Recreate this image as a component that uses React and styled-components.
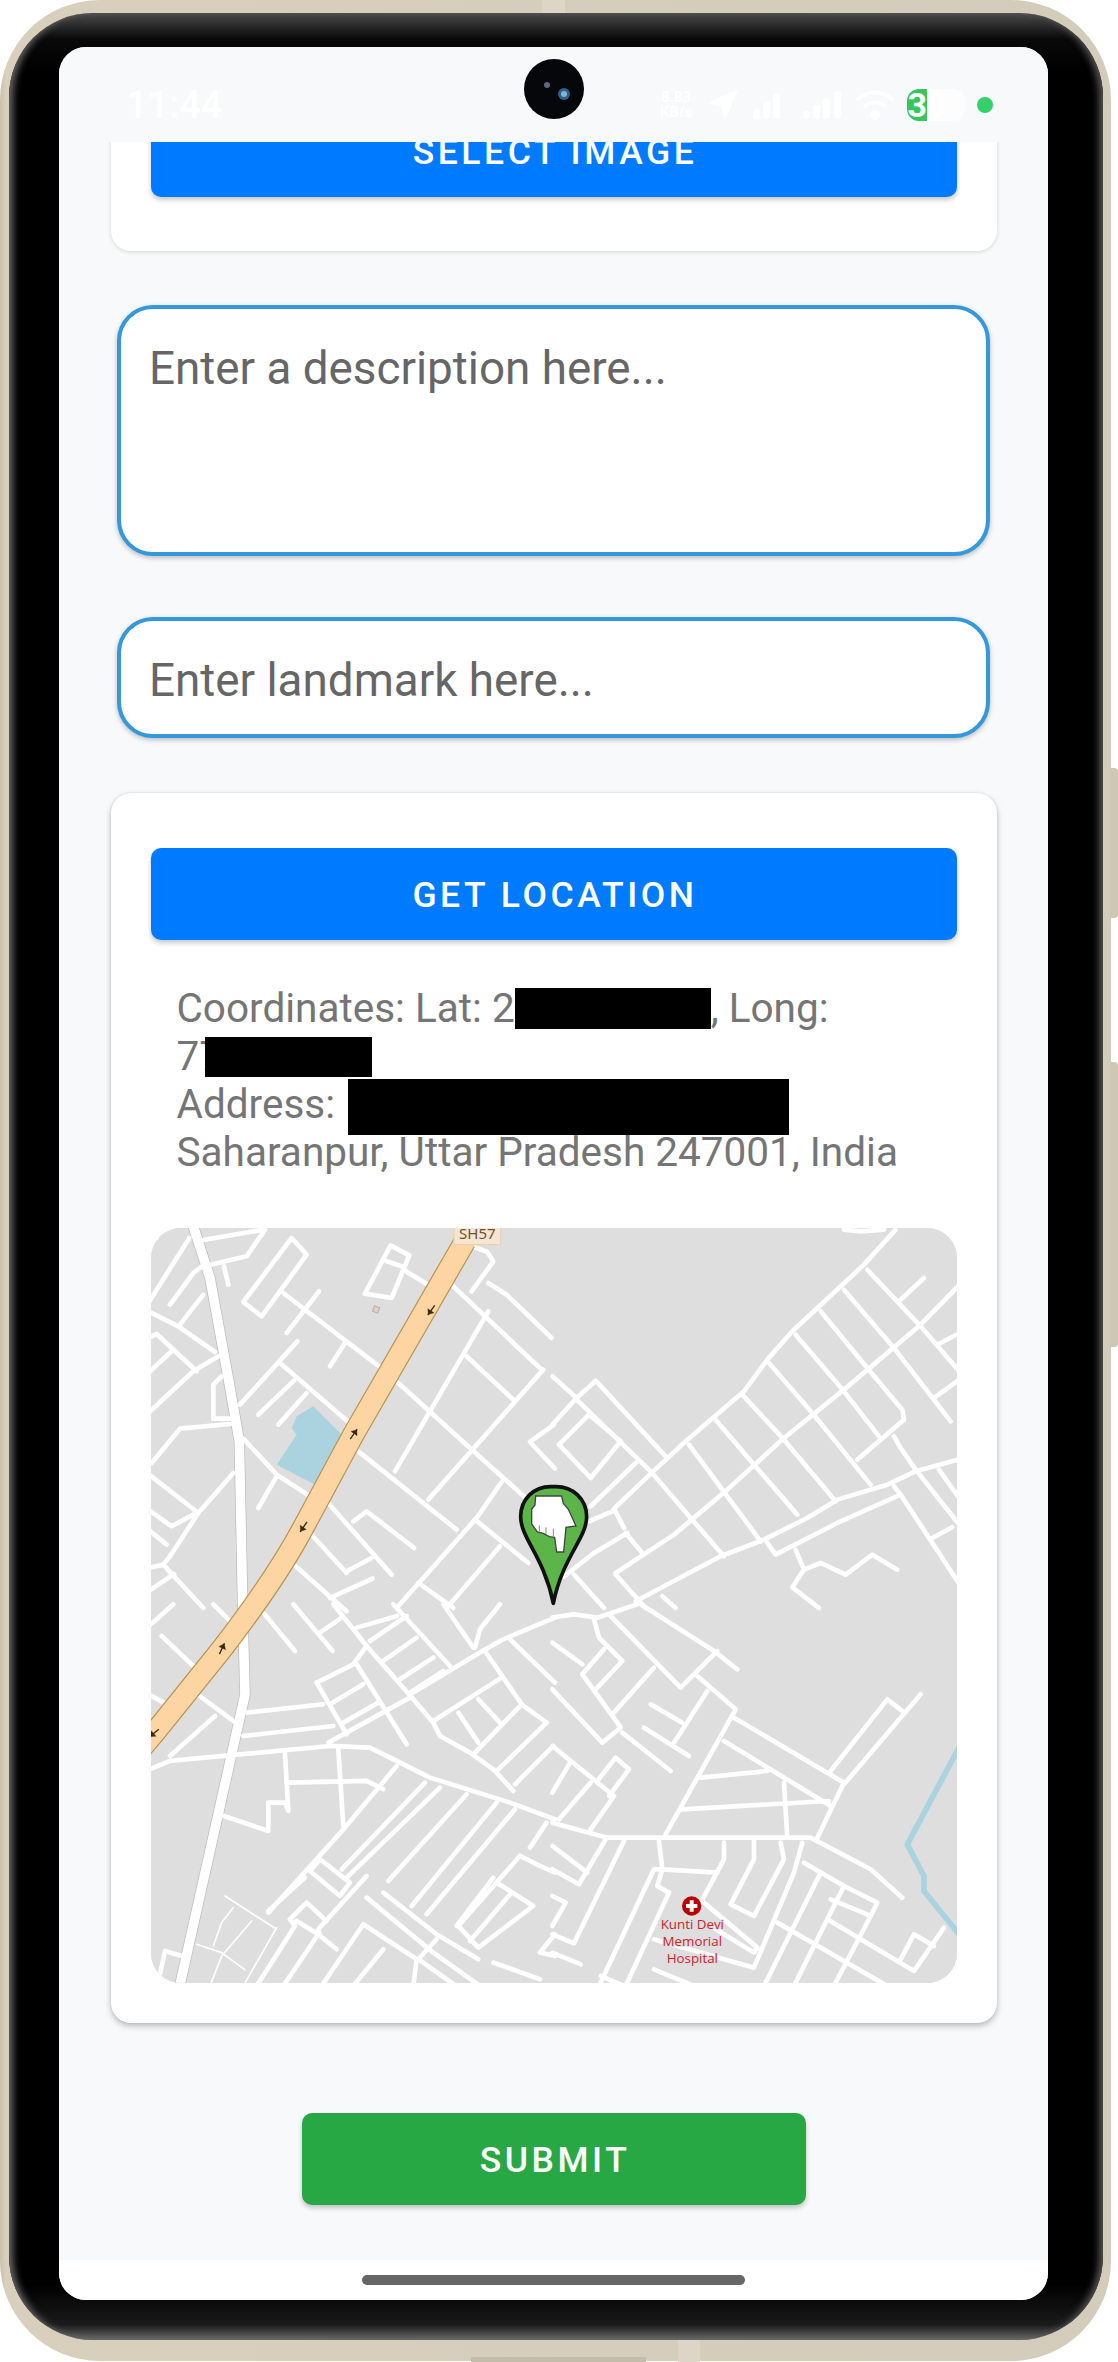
import React from 'react';
import styled, { createGlobalStyle } from 'styled-components';

const Global = createGlobalStyle`
  html, body { margin: 0; padding: 0; background: #fff; }
  * { box-sizing: border-box; }
  body { font-family: Roboto, "Liberation Sans", sans-serif; }
`;

const Page = styled.div`
  position: relative;
  width: 1118px;
  height: 2362px;
  background: #fff;
  overflow: hidden;
`;
const SideKey = styled.div`
  position: absolute;
  right: 0;
  top: ${p => p.$top}px;
  width: 8px;
  height: ${p => p.$h}px;
  background: #cfc7b5;
  border-radius: 0 4px 4px 0;
`;
const Nub = styled.div`
  position: absolute;
  left: ${p => p.$x}px;
  top: ${p => p.$y}px;
  width: ${p => p.$w}px;
  height: ${p => p.$h}px;
  background: ${p => p.$c};
`;
const Frame = styled.div`
  width: 1111px;
  height: 2361px;
  padding: 13px 8px 21px 9px;
  border-radius: 100px;
  background: linear-gradient(90deg, #c9c1ae 0, #d8cfbd 6px, #d4ccba 100%);
`;
const Bezel = styled.div`
  height: 100%;
  padding: 34px 55px 40px 50px;
  border-radius: 84px;
  background: linear-gradient(180deg, #4a4a4a 0, #090909 26px, #000 60px, #000 2270px, #0c0c0c 2290px, #1b1b1b 2312px, #6c6c6c 2327px);
  box-shadow: inset 7px 0 7px -3px #666, inset -7px 0 7px -3px #555;
`;
const Screen = styled.div`
  position: relative;
  display: flex;
  flex-direction: column;
  height: 100%;
  background: #f8f9fa;
  border-radius: 27px;
  overflow: hidden;
`;
const StatusBar = styled.div`
  display: flex;
  align-items: center;
  flex: 0 0 95px;
  padding: 20px 55px 0 67px;
  background: #f8f9fa;
  color: #fff;
`;
const Time = styled.div`
  font-size: 38px;
  font-weight: 500;
  color: #fff;
  flex: 1;
`;
const StatusGroup = styled.div`
  display: flex;
  align-items: center;
  gap: 12px;
`;
const Speed = styled.div`
  width: 38px;
  font-size: 15px;
  line-height: 15px;
  font-weight: 700;
  text-align: center;
  color: #fff;
`;
const BatteryPill = styled.div`
  display: flex;
  width: 58px;
  height: 32px;
  font-size: 34px;
  line-height: 32px;
  font-weight: 700;
  color: #fff;
`;
const BatteryGreen = styled.div`
  width: 20px;
  background: #34c759;
  border-radius: 12px 0 0 12px;
  text-align: right;
`;
const BatteryRest = styled.div`
  flex: 1;
  background: #fdfdfe;
  border-radius: 0 12px 12px 0;
`;
const GreenDot = styled.div`
  width: 16px;
  height: 16px;
  border-radius: 50%;
  background: #34d06a;
`;
const Camera = styled.svg`
  position: absolute;
  left: 464px;
  top: 11px;
  width: 62px;
  height: 62px;
`;
const Content = styled.div`
  flex: 1;
  min-height: 0;
  overflow: hidden;
  display: flex;
  flex-direction: column;
  align-items: center;
`;
const Card = styled.div`
  flex: none;
  width: 886px;
  margin-top: ${p => p.$top}px;
  padding: 55px 40px ${p => p.$bottom}px;
  background: #fff;
  border-radius: 20px;
  box-shadow: ${p => p.$deep ? '0 3px 6px rgba(0,0,0,.25), 0 0 2px rgba(0,0,0,.12)' : '0 1px 4px rgba(0,0,0,.14)'};
`;
const ActionButton = styled.div`
  display: flex;
  align-items: center;
  justify-content: center;
  flex: none;
  width: ${p => p.$w || '100%'};
  height: 92px;
  margin-top: ${p => p.$top || 0}px;
  padding: 2px 0 0 3px;
  background: ${p => p.$c};
  color: #fff;
  border-radius: 10px;
  font-size: 35.5px;
  font-weight: 500;
  letter-spacing: 3.55px;
  text-transform: uppercase;
  box-shadow: 0 3px 5px rgba(0,0,0,.22);
`;
const fieldCss = `
  display: block;
  flex: none;
  width: 873px;
  padding: 0 28px;
  border: 4.5px solid #3498db;
  border-radius: 36px;
  background: #fff;
  font-family: Roboto, "Liberation Sans", sans-serif;
  font-size: 45.8px;
  color: #666;
  outline: none;
  resize: none;
  box-shadow: 0 2px 5px rgba(0,0,0,.25);
  &::placeholder { color: #666; opacity: 1; }
`;
const DescriptionField = styled.textarea`
  ${fieldCss}
  height: 251px;
  margin-top: 54px;
  padding-top: 33px;
  line-height: 54px;
`;
const LandmarkField = styled.input`
  ${fieldCss}
  height: 121px;
  margin-top: 61px;
  padding-top: 6px;
`;
const LocationText = styled.div`
  margin: 44px 0 52px;
  padding: 0 26px;
  font-size: 40.5px;
  line-height: 48px;
  color: #757575;
`;
const Redacted = styled.span`
  display: inline-block;
  width: ${p => p.$w}px;
  height: ${p => p.$h}px;
  margin: ${p => p.$d - p.$h}px 0 -${p => p.$d}px ${p => p.$l || 0}px;
  background: #000;
`;
const MapBox = styled.div`
  width: 806px;
  height: 755px;
  border-radius: 30px;
  overflow: hidden;
  background: #dedede;
`;
const MapSvg = styled.svg`
  display: block;
  width: 806px;
  height: 755px;
`;
const NavBar = styled.div`
  flex: 0 0 40px;
  display: flex;
  align-items: flex-start;
  justify-content: center;
  padding-top: 15px;
  background: #fff;
`;
const HomeBar = styled.div`
  width: 383px;
  height: 10px;
  border-radius: 5px;
  background: #666;
`;

const Lines = ({ d, w = 14, c = '#fff' }) => (
  <g fill="none" stroke={c} strokeWidth={w} strokeLinecap="round" strokeLinejoin="round">
    {d.map((pts, i) => <polyline key={i} points={pts} />)}
  </g>
);

const q1 = [
  '-5,225 118,30', '60,230 130,135 160,112', '160,36 340,5', '175,112 290,85 345,5', '222,115 235,170',
  '-5,250 85,295 195,372', '90,290 160,200', '-5,435 62,372', '-5,330 20,318 140,430', '-5,555 130,430 205,385',
  '190,572 190,470 215,445', '190,572 240,572', '5,705 90,602 240,588', '-5,738 145,855 250,735',
  '-5,845 65,895 130,860', '60,985 145,855', '-5,905 50,950', '-5,1020 40,1010 160,1140', '60,985 40,1010', '-5,1090 72,1038',
  '280,222 425,30 470,80 335,265 280,222', '400,195 700,425', '745,465 960,660 1130,812', '410,315 507,190', '540,415 585,345',
  '270,530 442,340', '390,405 605,590', '625,670 920,905', '325,560 432,458', '385,590 470,495',
  '280,632 380,740 480,805', '530,820 725,1040', '325,840 380,745',
  '645,197 722,52 778,82 725,210 645,197', '710,100 755,115', '760,125 850,180', '910,175 1175,425',
  '1015,250 735,730', '1015,165 1070,200 1205,330', '965,190 1030,100 1012,72 975,58', '950,385 1090,515',
  '1180,425 835,815', '610,880 650,850 792,960', '480,915 590,1035', '420,1000 590,1150', '590,1030 665,990', '540,1110 668,1052',
  '1212,590 1140,642 1215,722', '1055,762 980,870 740,1140', '975,875 1135,1005', '1050,955 890,1140', '805,1065 910,1140',
  '-5,2 20,30',
];
const q2 = [
  '1025,5 930,110 715,310 640,395 570,490 395,640 300,728 180,842 210,900', '-5,445 68,510 125,458 335,685',
  '-5,590 68,510', '68,515 290,730 410,870 510,985', '15,650 105,560 200,640 110,750 15,650', '110,835 245,705', '105,880 175,850',
  '120,975 220,915', '185,1035 360,920 520,785 690,630 870,485 1100,290 1212,175', '30,1045 120,975',
  '405,650 620,940', '485,575 600,710 730,860', '565,500 690,635 845,820', '645,405 775,555 950,770', '725,320 870,490 975,625',
  '800,250 940,420 1045,545 1050,575 910,695', '870,185 1020,360 1190,580', '940,125 1100,295 1212,425', '1035,220 1110,150',
  '1150,350 1212,318', '1140,510 1212,458', '1020,625 1040,660 1085,725 1212,885',
  '245,1120 500,985 630,935 760,870 850,815 1000,770 1085,730 1212,695', '640,945 665,980 850,885 1040,800 1020,775',
  '1040,800 1212,1062', '1155,725 1212,805', '1135,930 1195,898', '725,965 750,1025 715,1078 795,1140',
  '750,1025 800,1005 875,1040 955,980 1030,1025', '185,1040 275,1140', '60,1040 150,1140', '215,915 265,975', '325,1105 365,1140',
  '870,5 920,10 990,5',
];
const q3 = [
  '-5,62 70,-5', '190,-5 245,50', '35,90 135,185', '340,20 435,135', '430,-5 548,135', '510,80 575,35', '620,65 742,30',
  '550,-5 650,120 790,280 850,350 870,390 960,440 1030,490 1090,555', '660,105 770,30', '700,165 800,95', '750,220 850,155', '780,260 880,195',
  '790,260 990,140 1060,100 1215,35', '730,-5 900,180', '880,-5 970,125', '975,125 990,70 1050,-5',
  '1005,135 1115,295 1190,350 1040,495', '850,345 1055,215', '1115,295 975,440', '925,320 985,410', '985,280 1050,350',
  '1080,100 1215,230', '1210,420 1095,535',
  '500,230 610,175 650,120', '500,230 590,385', '540,295 640,235', '580,350 685,290', '535,410 780,275', '620,175 770,415',
  '290,320 520,295', '280,390 550,360', '135,260 250,345', '-5,265 50,295', '60,450 195,330',
  '-5,492 60,465 540,420 660,425 740,465 840,515 1080,590 1215,640',
  '405,445 415,615 405,590 355,590 355,675 222,630', '410,530 650,525 700,550', '565,430 580,660',
  '740,480 585,665 355,920', '825,530 575,790', '870,545 590,815', '950,565 715,825', '1040,590 785,900', '1095,610 830,925', '1190,650 1140,725',
  '510,760 600,830 570,870 480,795 510,760', '465,815 355,915', '650,810 505,970 510,990 560,1030',
  '465,895 420,940 435,960 320,1140', '470,890 530,945', '700,860 860,985 985,1060', '650,875 850,1040 990,1140',
  '1110,750 925,960 985,1025 1150,900 1040,830', '1110,750 1160,775 1215,800', '1030,815 920,960', '1085,860 960,1005',
  '515,1140 640,955 800,1060 790,1140', '700,1030 610,1140', '30,1105 45,1035 95,1050', '1215,985 1170,1040 1215,1050',
  '1030,1070 1170,1120', '860,1000 805,1060 910,1134', '440,945 505,985 400,1140',
];
const q3Thin = ['225,870 380,970', '250,905 215,950 190,1020', '305,945 215,1050 180,1140', '380,965 280,1140', '140,1015 215,1040 285,1092'];
const q4 = [
  '-5,35 60,25 130,35 250,-5', '-5,110 85,175', '120,40 135,95 205,165 125,250', '85,205 150,130', '85,205 190,350 200,365 145,410 -5,250',
  '175,325 300,185', '170,30 380,245 490,135', '260,-5 480,135 550,190', '430,210 545,310 335,685', '460,255 360,410',
  '290,295 385,350', '270,365 405,450', '205,380 350,495', '540,335 870,530 790,695', '510,405 830,600', '1100,265 870,535',
  '830,495 1000,280 1045,315', '440,515 640,495', '385,610 825,585', '690,530 700,695',
  '-5,650 160,695 770,695 950,790 1045,875', '130,525 185,455 225,490 165,570', '-5,420 180,570 110,670', '15,640 110,530', '-5,560 45,475',
  '155,700 75,835 -5,790', '210,705 60,1012 -5,985', '-5,870 35,890 -5,960', '300,790 135,1140', '300,790 325,790 490,800', '315,705 325,790 310,840 345,860 215,1140',
  '510,710 510,760 440,890', '600,705 600,760 530,895 600,930 690,760 680,710', '745,710 720,800 600,1085 300,1000',
  '750,770 870,840 970,890 950,930 830,880', '800,800 700,1000 630,1140', '870,840 720,1140', '950,930 840,1140',
  '820,940 1080,1095 1170,965', '1040,1060 1080,985 1140,1020', '670,950 1000,1140', '450,890 610,1025 600,1040 470,960', '300,1090 420,1140',
  '-5,1040 80,1075', '140,1110 210,1140', '-5,720 100,800',
];

const highway = 'M945,40 L610,620 L462,895 Q380,1050 215,1264 L14,1514 L-30,1565';

const Arrow = ({ x, y, r }) => (
  <g transform={`translate(${x} ${y}) rotate(${r})`} fill="#3a2a12" stroke="#3a2a12">
    <line x1="0" y1="-20" x2="0" y2="16" strokeWidth="4" />
    <path d="M-11,-4 L0,-18 L11,-4 Z" strokeWidth="1" />
  </g>
);

const MapDrawing = () => (
  <MapSvg viewBox="151 1228 806 755">
    <rect x="151" y="1228" width="806" height="755" fill="#dedede" />
    <g transform="translate(150 1228) scale(0.3333)">
      <polygon points="490,535 580,625 495,770 380,710 440,620 425,600 440,565" fill="#aad3df" />
      <Lines d={['130,-5 180,150 240,480 268,640 278,1134 285,1400 90,2270']} w={33} c="#b9b9b9" />
      <Lines d={['130,-5 180,150 240,480 268,640 278,1134 285,1400 90,2270']} w={29} />
      <Lines d={q1} />
      <g transform="translate(0 1134)">
        <Lines d={q3} />
        <Lines d={q3Thin} w={5} />
      </g>
      <path d={highway} fill="none" stroke="#b8914f" strokeWidth="68" />
      <path d={highway} fill="none" stroke="#fdd5a2" strokeWidth="61" />
      <Arrow x={845} y={245} r={215} />
      <Arrow x={610} y={620} r={35} />
      <Arrow x={462} y={895} r={215} />
      <Arrow x={215} y={1264} r={25} />
      <Arrow x={14} y={1514} r={230} />
      <rect x="912" y="-20" width="140" height="70" rx="6" fill="#f7e5cf" stroke="#e8cfae" strokeWidth="3" />
      <text x="982" y="32" textAnchor="middle" fontFamily="'Noto Sans', sans-serif" fontSize="45" fill="#6b5233">SH57</text>
      <rect x="670" y="236" width="17" height="17" transform="rotate(20 678 244)" fill="#d9d2c8" stroke="#c2ae9c" strokeWidth="3" />
    </g>
    <g transform="translate(554 1228) scale(0.3333)">
      <Lines d={q2} />
    </g>
    <g transform="translate(554 1606) scale(0.3333)">
      <Lines d={['1215,425 1060,715 1110,810 1110,855 1215,985']} w={17} c="#aad3df" />
      <Lines d={q4} />
      <circle cx="413" cy="900" r="29" fill="#b80000" />
      <path d="M407,883 h12 v11 h11 v12 h-11 v11 h-12 v-11 h-11 v-12 h11 z" fill="#fff" />
      <g fontFamily="'Open Sans', sans-serif" fontSize="40" fill="#c8242c" textAnchor="middle" stroke="#dedede" strokeWidth="6" paintOrder="stroke">
        <text x="415" y="970">Kunti Devi</text>
        <text x="415" y="1020">Memorial</text>
        <text x="415" y="1071">Hospital</text>
      </g>
    </g>
    <g transform="translate(500 1450) scale(0.3333)">
      <path d="M160,110 C100,106 62,150 62,200 C62,265 132,320 160,460 C188,320 260,265 260,200 C260,150 220,106 160,110 Z" fill="#5cb548" stroke="#111" strokeWidth="11" strokeLinejoin="round" />
      <path d="M107,138 L185,138 L190,160 L205,178 L228,228 L198,232 L191,306 L170,306 L164,262 L148,260 L130,250 L112,246 L95,222 L95,178 L105,165 Z" fill="#fff" stroke="#444" strokeWidth="4" />
      <path d="M118,226 V245 M138,232 V252 M160,236 V258" stroke="#888" strokeWidth="3" fill="none" />
    </g>
  </MapSvg>
);

export default function App() {
  return (
    <Page>
      <Global />
      <Nub $x={542} $y={0} $w={23} $h={13} $c="#ddd5c6" />
      <Nub $x={678} $y={2340} $w={22} $h={22} $c="#ddd5c6" />
      <Nub $x={471} $y={2357} $w={175} $h={5} $c="#c4bcab" />
      <SideKey $top={768} $h={150} />
      <SideKey $top={1062} $h={285} />
      <Frame>
        <Bezel>
          <Screen>
            <StatusBar>
              <Time>11:44</Time>
              <StatusGroup>
                <Speed>8.83<br />KB/s</Speed>
                <svg width="32" height="32" viewBox="0 0 32 32"><path d="M31,0 L0,14 L14,18 L18,32 Z" fill="#fff" /></svg>
                <svg width="30" height="28" viewBox="0 0 30 28" fill="#fff"><rect x="2" y="18" width="7" height="10" rx="3" /><rect x="12" y="10" width="7" height="18" rx="3" /><rect x="22" y="2" width="7" height="26" rx="3" opacity=".9" /></svg>
                <svg width="50" height="28" viewBox="0 0 50 28" fill="#fff"><rect x="10" y="20" width="7" height="8" rx="3" /><rect x="20" y="14" width="7" height="14" rx="3" /><rect x="30" y="7" width="7" height="21" rx="3" /><rect x="41" y="0" width="7" height="28" rx="3" /></svg>
                <svg width="40" height="30" viewBox="0 0 40 30" fill="none" stroke="#fff" strokeWidth="4"><path d="M2,10 C12,0 28,0 38,10" /><path d="M9,17 C15,11 25,11 31,17" /><circle cx="20" cy="25" r="3" fill="#fff" /></svg>
                <BatteryPill><BatteryGreen>3</BatteryGreen><BatteryRest>0</BatteryRest></BatteryPill>
                <GreenDot />
              </StatusGroup>
            </StatusBar>
            <Camera viewBox="0 0 62 62">
              <circle cx="31" cy="31" r="30" fill="#05070a" />
              <circle cx="24" cy="27" r="3" fill="#5b6a7c" />
              <circle cx="41" cy="36" r="6" fill="#2f5f86" />
              <circle cx="41" cy="36" r="3" fill="#7fb6d8" />
            </Camera>
            <Content>
              <Card $top={-92} $bottom={54}>
                <ActionButton $c="#007bff">Select Image</ActionButton>
              </Card>
              <DescriptionField placeholder="Enter a description here..." rows={3} />
              <LandmarkField placeholder="Enter landmark here..." />
              <Card $top={55} $bottom={40} $deep>
                <ActionButton $c="#007bff">Get Location</ActionButton>
                <LocationText>
                  Coordinates: Lat: 2<Redacted $w={196} $h={41} $d={7} />, Long:
                  <br />
                  77<Redacted $w={167} $h={40} $d={7} $l={-17} />
                  <br />
                  Address: <Redacted $w={441} $h={56} $d={17} $l={3} />
                  <br />
                  Saharanpur, Uttar Pradesh 247001, India
                </LocationText>
                <MapBox><MapDrawing /></MapBox>
              </Card>
              <ActionButton $c="#28a745" $w="504px" $top={90}>Submit</ActionButton>
            </Content>
            <NavBar><HomeBar /></NavBar>
          </Screen>
        </Bezel>
      </Frame>
    </Page>
  );
}
